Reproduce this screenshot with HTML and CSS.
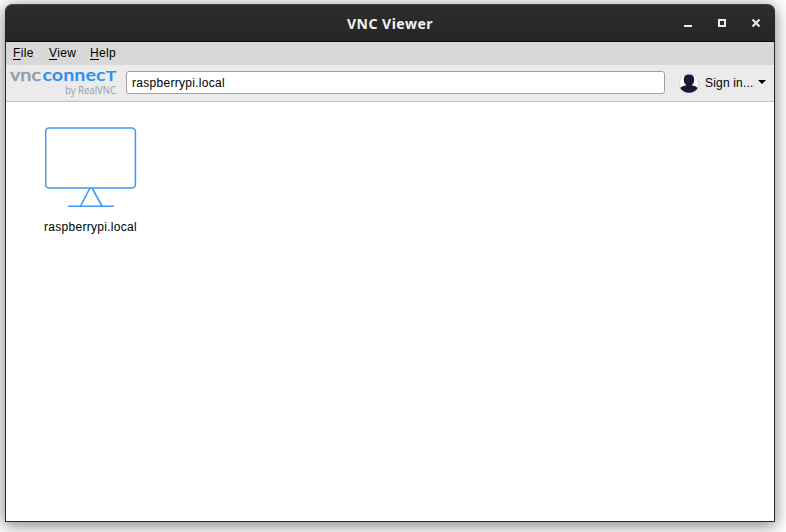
FILE: index.html
```html
<!DOCTYPE html>
<html lang="en">
<head>
<meta charset="utf-8">
<title>VNC Viewer</title>
<link rel="stylesheet" href="styles.css">
</head>
<body>
<main class="window">
  <header class="titlebar">
    <h1 class="title">VNC Viewer</h1>
    <div class="controls">
      <svg width="10" height="10" viewBox="0 0 10 10"><path d="M1 8h8" stroke="#eee" stroke-width="2"/></svg>
      <svg width="10" height="10" viewBox="0 0 10 10"><path d="M2 2h6v6H2z" fill="none" stroke="#eee" stroke-width="2"/></svg>
      <svg width="10" height="10" viewBox="0 0 10 10"><path d="M1.5 1.5l7 7M8.5 1.5l-7 7" stroke="#eee" stroke-width="2"/></svg>
    </div>
  </header>
  <nav class="menubar">
    <span class="menu file"><u>F</u>ile</span>
    <span class="menu view"><u>V</u>iew</span>
    <span class="menu help"><u>H</u>elp</span>
  </nav>
  <section class="toolbar">
    <svg class="logo" width="116" height="36" viewBox="0 0 116 36">
      <text class="logo-vnc" x="4" y="16" textLength="31" lengthAdjust="spacingAndGlyphs">vnc</text>
      <text class="logo-connect" x="36.5" y="16" textLength="63" lengthAdjust="spacingAndGlyphs">connec</text>
      <text class="logo-t" x="99.5" y="16" textLength="11" lengthAdjust="spacingAndGlyphs">T</text>
      <text class="logo-by" x="59" y="29" textLength="51" lengthAdjust="spacingAndGlyphs">by RealVNC</text>
    </svg>
    <div class="address">raspberrypi.local</div>
    <div class="account">
      <svg width="20" height="20" viewBox="0 0 20 20">
        <circle cx="10" cy="10" r="9.5" fill="#fff" stroke="#d2d2d2"/>
        <path d="M1.2 15Q3 12.8 7.3 12.2Q4.7 10.3 4.7 6.8Q4.7 1.6 10 1.6T15.3 6.8Q15.3 10.3 12.7 12.2Q17 12.8 18.8 15Q15.8 19.8 10 19.8T1.2 15Z" fill="#191933"/>
      </svg>
      <span class="signin">Sign in...</span>
      <svg class="arrow" width="8" height="4" viewBox="0 0 8 4"><path d="M0 0h8L4 4z" fill="#000"/></svg>
    </div>
  </section>
  <section class="content">
    <figure class="host">
      <svg class="monitor" width="92" height="82" viewBox="0 0 92 82" fill="none" stroke="#4299f4" stroke-width="1.6">
        <rect x=".6" y="1" width="89.8" height="60" rx="3.5"/>
        <path d="M45 61L35.5 79M47 61L57 79M23 79.3h46"/>
      </svg>
      <figcaption class="host-name">raspberrypi.local</figcaption>
    </figure>
  </section>
</main>
</body>
</html>
```
FILE: styles.css
```css
* { box-sizing: border-box; }
body {
  margin: 0;
  width: 786px;
  height: 532px;
  padding: 4px 0 0 5px;
  overflow: hidden;
  background: #fff;
  font: 12px/16px "Liberation Sans", Arial, sans-serif;
  color: #000;
}
.window {
  display: flex;
  flex-direction: column;
  width: 770px;
  height: 518px;
  border: 1px solid #2a2a2a;
  border-top: 0;
  border-radius: 8px 8px 0 0;
  background: #fff;
  box-shadow: 0 3px 16px 1px rgba(0, 0, 0, .48);
}
.titlebar {
  display: grid;
  grid-template-columns: 1fr auto 1fr;
  align-items: center;
  flex: none;
  height: 38px;
  margin: 0 -1px;
  padding: 0 14px;
  border-top: 1px solid #424242;
  border-bottom: 1px solid #0c0c0c;
  border-radius: 8px 8px 0 0;
  background: linear-gradient(#2d2d2d, #252525);
}
.title {
  grid-column: 2;
  margin: 2px 0 0;
  font: bold 14px/20px "Noto Sans", sans-serif;
  letter-spacing: .5px;
  color: #f2f2f2;
}
.controls {
  display: flex;
  justify-content: flex-end;
  gap: 24px;
}
.menubar {
  display: flex;
  flex: none;
  height: 23px;
  padding: 3px 0 0 7px;
  background: #d8d8d8;
}
.menu { letter-spacing: .35px; }
.menu u { text-underline-offset: 2px; }
.file { width: 36px; }
.view { width: 41px; }
.toolbar {
  display: flex;
  flex: none;
  height: 37px;
  background: #ebebeb;
  border-bottom: 1px solid #c3c3c3;
}
.logo { margin-right: 4px; flex: none; overflow: visible; }
.logo .logo-vnc { font: 500 17.5px Lato, sans-serif; fill: #929db0; stroke: #929db0; stroke-width: .5px; }
.logo .logo-connect { font: bold 17.5px Lato, sans-serif; fill: #2f8ff4; }
.logo .logo-t { font: bold 14px Lato, sans-serif; fill: #2f8ff4; }
.logo .logo-by { font: 10px "Open Sans", sans-serif; fill: #929db0; }
.address {
  width: 539px;
  height: 23px;
  margin-top: 6px;
  padding: 3px 5px;
  border: 1px solid #a0a0a0;
  border-radius: 3px;
  background: #fff;
  letter-spacing: .29px;
}
.account {
  display: flex;
  align-items: center;
  height: 36px;
  margin-left: 14px;
}
.signin { width: 53px; margin-left: 6px; letter-spacing: .18px; }
.arrow { margin: -2px 0 0; }
.content { flex: 1; padding: 25px 0 0 38px; }
.host {
  display: flex;
  flex-direction: column;
  width: 94px;
  margin: 0;
}
.monitor { margin-left: 1px; }
.host-name { margin-top: 10px; letter-spacing: .29px; white-space: nowrap; }
```
